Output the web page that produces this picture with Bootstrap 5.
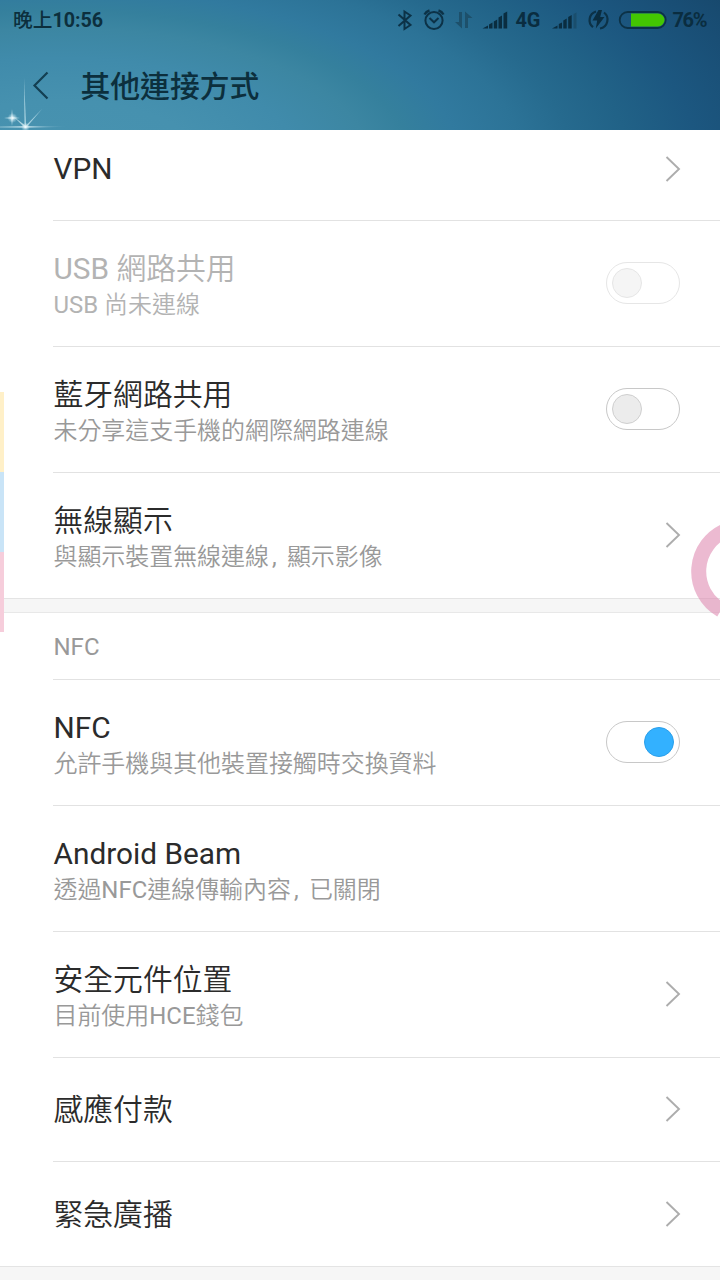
<!DOCTYPE html>
<html lang="zh-Hant">
<head>
<meta charset="utf-8">
<meta name="viewport" content="width=device-width, initial-scale=1">
<title>其他連接方式</title>
<link href="https://cdn.jsdelivr.net/npm/bootstrap@5.3.0/dist/css/bootstrap.min.css" rel="stylesheet">
<style>
body{font-family:Roboto,"Noto Sans CJK TC",sans-serif;height:1280px;overflow:hidden;background:#fff;color:#2b2b2b}
.app-head{height:130px;color:#0c2f3d;overflow:hidden;
 background:radial-gradient(ellipse 700px 300px at 60px 160px,#4893b0 0%,#4691af 20%,#408bab 34%,#3c86a2 44%,#35809d 50%,#317a9f 57%,#2c7397 66%,#266a8e 73%,#216287 81%,#1c5780 91%,#194e75 102%,#17486c 110%)}
.status-row{height:40px;padding-left:13px;padding-right:12px;font-size:19.7px;font-weight:700;line-height:42px}
.status-row .clock{font-weight:500;padding-top:1px}
.status-row .clock b{font-weight:700}
.title-row{height:90px;padding-left:31px}
.title-row h1{font-size:29.8px;font-weight:500;line-height:40px;margin:3px 0 0 29.500px}
.sparkle{left:0;top:70px}
.entry{min-height:126px;margin-left:53px;padding-left:.5px;padding-right:40px;border:0;border-bottom:1px solid #e2e2e2}
.entry.single{min-height:104px;padding-top:1px}
.entry.last{border-bottom:0}
.entry.first{min-height:91px;padding-bottom:14px}
.entry.first .name{padding-top:1px}
.entry.plain{border-bottom:0;min-height:125px}
.name,.desc{font-family:Roboto,"Noto Sans CJK TC DemiLight","Noto Sans CJK TC",sans-serif;white-space:nowrap}
.name{font-size:29.8px;line-height:43px}
.entry.single .name{line-height:44px}
.desc{font-size:23.95px;line-height:31px;color:#999}
.off .name,.off .desc{color:#b3b3b3}
.comma{display:inline-block;width:18px;padding-left:3px}
.gap-band{height:15px;background:#f6f6f6;border-top:1px solid #e4e4e4;border-bottom:1px solid #e8e8e8}
.group-label{margin-left:53px;padding-left:.5px;height:67px;font-size:24px;line-height:68px;color:#999;border-bottom:1px solid #e2e2e2}
.toggle{width:74px;height:42px;border:1px solid #c8c8c8;border-radius:21px;padding:0 5px;margin-bottom:1px}
.toggle i{width:30px;height:30px;border-radius:50%;background:#ececec;border:1px solid #cfcfcf}
.toggle.on i{background:#33b1ff;border-color:#2b9fea}
.off .toggle{border-color:#e6e6e6}
.off .toggle i{background:#f5f5f5;border-color:#e6e6e6}
.entry svg{margin-right:-1px;margin-bottom:2px}
.entry.first svg{margin-bottom:0}
.side-tabs{left:0;top:392px;width:4px}
.side-tabs div{height:80px}
.ring{left:680px;top:510px}
</style>
</head>
<body class="position-relative">
<header class="app-head position-relative">
 <svg class="sparkle position-absolute" width="80" height="60" viewBox="0 0 80 60">
  <defs>
   <radialGradient id="glow"><stop offset="0" stop-color="#fff"/><stop offset=".3" stop-color="#e4f5fa" stop-opacity=".7"/><stop offset="1" stop-color="#bfe3ee" stop-opacity="0"/></radialGradient>
   <linearGradient id="ray"><stop offset="0" stop-color="#cbe9f0" stop-opacity=".6"/><stop offset=".4" stop-color="#e4f6fa" stop-opacity=".9"/><stop offset="1" stop-color="#9fcbdc" stop-opacity="0"/></linearGradient>
  </defs>
  <path d="M24.500 57L24 8L26.200 57Z" fill="#b9dde8" opacity=".8"/>
  <path d="M25 56.500L42 39L26 58Z" fill="#b9dde8" opacity=".8"/>
  <path d="M25 58L14 47L26 56Z" fill="#c9e6ee" opacity=".8"/>
  <path d="M0 56.500L26 56L68 56.800L26 57.700L0 57.500Z" fill="url(#ray)" opacity=".8"/>
  <path d="M12 39L12.800 47L20 48L12.800 49L12 56L11.200 49L4 48L11.200 47Z" fill="#d6eef5" opacity=".7"/>
  <circle cx="12.500" cy="48" r="5" fill="url(#glow)"/><circle cx="25.500" cy="57" r="4.500" fill="url(#glow)"/>
 </svg>
 <div class="status-row d-flex align-items-center justify-content-between">
  <div class="clock">晚上<b>10:56</b></div>
  <svg width="312" height="40" viewBox="396 0 312 40" fill="none" stroke="#0c3247">
   <path d="M398.500 14.500L410.500 25L404.500 29V11.500L410.500 15.500L398.500 26" stroke-width="2"/>
   <g stroke-width="2"><circle cx="434" cy="20.500" r="8.600"/><path d="M429.500 18L434 22.300L438.500 18"/><path d="M424.500 14.500Q426 11.500 429.500 10.500M443.500 14.500Q442 11.500 438.500 10.500" stroke-width="2.400"/></g>
   <g fill="#1d506b" stroke="none"><path d="M459 12H462V28.500L455 22H459ZM465 28V11.500L472.500 18H468V28Z"/></g>
   <g fill="#0a2d40" stroke="none">
    <path d="M482.500 28.500L488 25.500V28.500ZM489 24.500L492.500 22.500V28.500H489ZM493.800 21.500L497.200 19.500V28.500H493.800ZM498.500 17.500L502 15.500V28.500H498.500ZM503.500 13.500L507.200 11.500V28.500H503.500Z"/>
    <path d="M552 28.500L557.500 25.500V28.500ZM558.800 24L562 22.500V28.500H558.800ZM563.300 20.500L566.700 18.500V28.500H563.300ZM568.200 17L571.700 15V28.500H568.200Z"/>
    <path d="M573.500 14L576.500 12.500V28.500H573.500Z" fill="#1a4e6d"/>
    <path d="M598.500 10L592.500 20.500H597.200L595.800 28.500L604.500 17H600.200L602 10Z"/>
    <text x="515.500" y="27" font-size="20" font-weight="700" textLength="25">4G</text>
    <text x="672.500" y="27" font-size="20" font-weight="700" textLength="35">76%</text>
   </g>
   <path d="M596 11.500A9 9 0 0 0 593 27.200M604 12.500A9 9 0 0 1 600 28.500" stroke-width="2.200"/>
   <rect x="619.700" y="12" width="46" height="16" rx="8" stroke-width="1.800"/>
   <path d="M631 13.500H658A6.500 6.500 0 0 1 658 26.500H631Z" fill="#43c602" stroke="none"/>
  </svg>
 </div>
 <div class="title-row d-flex align-items-center">
  <svg width="20" height="30" viewBox="0 0 20 30" fill="none" stroke="#133f52" stroke-width="2.200"><path d="M16.500 2.500L3.500 15.500L16.500 28.500"/></svg>
  <h1>其他連接方式</h1>
 </div>
</header>

<svg class="d-none"><symbol id="chev" viewBox="0 0 16 26"><path d="M1.500 1L14 13L1.500 25" fill="none" stroke="#adadad" stroke-width="1.900"/></symbol></svg>

<main>
 <div class="list-group list-group-flush">
  <div class="entry single first d-flex align-items-center justify-content-between"><div class="name">VPN</div><svg width="16" height="26"><use href="#chev"/></svg></div>
  <div class="entry off d-flex align-items-center justify-content-between"><div><div class="name">USB 網路共用</div><div class="desc">USB 尚未連線</div></div><div class="toggle d-flex align-items-center"><i></i></div></div>
  <div class="entry d-flex align-items-center justify-content-between"><div><div class="name">藍牙網路共用</div><div class="desc">未分享這支手機的網際網路連線</div></div><div class="toggle d-flex align-items-center"><i></i></div></div>
  <div class="entry plain d-flex align-items-center justify-content-between"><div><div class="name">無線顯示</div><div class="desc">與顯示裝置無線連線<span class="comma">,</span>顯示影像</div></div><svg width="16" height="26"><use href="#chev"/></svg></div>
 </div>
 <div class="gap-band"></div>
 <div class="group-label">NFC</div>
 <div class="list-group list-group-flush">
  <div class="entry d-flex align-items-center justify-content-between"><div><div class="name">NFC</div><div class="desc">允許手機與其他裝置接觸時交換資料</div></div><div class="toggle on d-flex align-items-center justify-content-end"><i></i></div></div>
  <div class="entry d-flex align-items-center justify-content-between"><div><div class="name">Android Beam</div><div class="desc">透過NFC連線傳輸內容<span class="comma">,</span>已關閉</div></div></div>
  <div class="entry d-flex align-items-center justify-content-between"><div><div class="name">安全元件位置</div><div class="desc">目前使用HCE錢包</div></div><svg width="16" height="26"><use href="#chev"/></svg></div>
  <div class="entry single d-flex align-items-center justify-content-between"><div class="name">感應付款</div><svg width="16" height="26"><use href="#chev"/></svg></div>
  <div class="entry single last d-flex align-items-center justify-content-between"><div class="name">緊急廣播</div><svg width="16" height="26"><use href="#chev"/></svg></div>
 </div>
 <div class="gap-band"></div>
</main>

<div class="side-tabs position-absolute"><div style="background:#fff0c8"></div><div style="background:#c9e4f7"></div><div style="background:#f6cddb"></div></div>
<svg class="ring position-absolute" width="40" height="120" viewBox="680 510 40 120"><path d="M727 530A44.500 44.500 0 0 0 721 610" fill="none" stroke="#e08cb2" stroke-opacity=".6" stroke-width="15"/></svg>
<script src="https://cdn.jsdelivr.net/npm/bootstrap@5.3.0/dist/js/bootstrap.bundle.min.js"></script>
</body>
</html>
